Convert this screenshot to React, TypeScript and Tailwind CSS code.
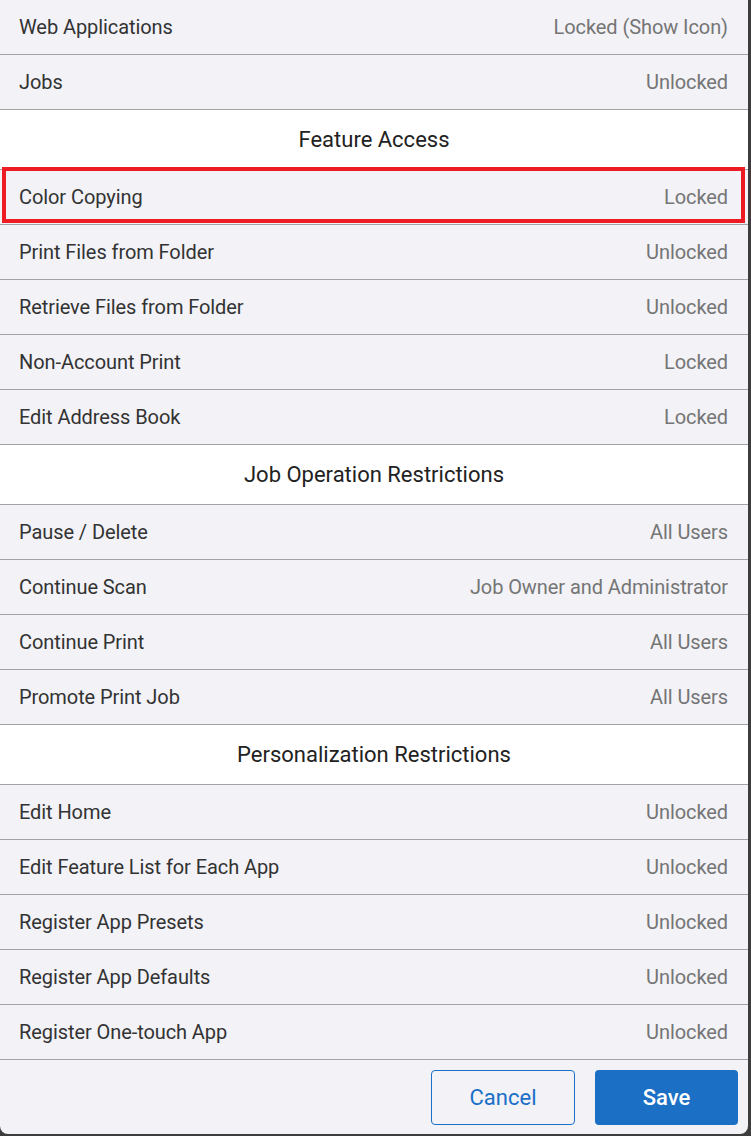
const sections: { title?: string; rows: [string, string][] }[] = [
  {
    rows: [
      ["Web Applications", "Locked (Show Icon)"],
      ["Jobs", "Unlocked"],
    ],
  },
  {
    title: "Feature Access",
    rows: [
      ["Color Copying", "Locked"],
      ["Print Files from Folder", "Unlocked"],
      ["Retrieve Files from Folder", "Unlocked"],
      ["Non-Account Print", "Locked"],
      ["Edit Address Book", "Locked"],
    ],
  },
  {
    title: "Job Operation Restrictions",
    rows: [
      ["Pause / Delete", "All Users"],
      ["Continue Scan", "Job Owner and Administrator"],
      ["Continue Print", "All Users"],
      ["Promote Print Job", "All Users"],
    ],
  },
  {
    title: "Personalization Restrictions",
    rows: [
      ["Edit Home", "Unlocked"],
      ["Edit Feature List for Each App", "Unlocked"],
      ["Register App Presets", "Unlocked"],
      ["Register App Defaults", "Unlocked"],
      ["Register One-touch App", "Unlocked"],
    ],
  },
]

function Row({ label, value, highlight }: { label: string; value: string; highlight?: boolean }) {
  return (
    <div className="relative flex h-[55px] items-center justify-between border-b border-[#a3a3a6] bg-[#f2f2f7] pl-[19px] pr-[20px]">
      <span className="text-[20px] tracking-[-0.08px] text-[#333]">{label}</span>
      <span className="text-[20px] tracking-[-0.08px] text-[#757575]">{value}</span>
      {highlight && (
        <div className="pointer-events-none absolute left-[2px] right-[3px] top-[-3px] bottom-[1px] border-4 border-[#ed1c24]" />
      )}
    </div>
  )
}

export default function App() {
  return (
    <div
      className="w-[751px] h-[1136px] bg-[#3d3d3d]"
      style={{ fontFamily: "Roboto, 'Liberation Sans', sans-serif" }}
    >
      <div className="flex h-[1134px] w-[748px] flex-col overflow-hidden rounded-b-[8px] bg-[#f2f2f7]">
        {sections.map((section, i) => (
          <div key={i}>
            {section.title && (
              <div className="flex h-[60px] items-center justify-center border-b border-[#a3a3a6] bg-white text-[22px] text-[#222]">
                {section.title}
              </div>
            )}
            {section.rows.map(([label, value]) => (
              <Row key={label} label={label} value={value} highlight={label === "Color Copying"} />
            ))}
          </div>
        ))}

        {/* Footer buttons */}
        <div className="flex flex-1 items-start justify-end gap-[20px] pr-[10px] pt-[10px]">
          <button className="h-[55px] w-[144px] rounded-[4px] border border-[#1a6fc6] bg-transparent text-[22px] text-[#1a6fc6]">
            Cancel
          </button>
          <button className="h-[55px] w-[143px] rounded-[4px] bg-[#1b6fc5] text-[22px] font-medium text-white">
            Save
          </button>
        </div>
      </div>
    </div>
  )
}
